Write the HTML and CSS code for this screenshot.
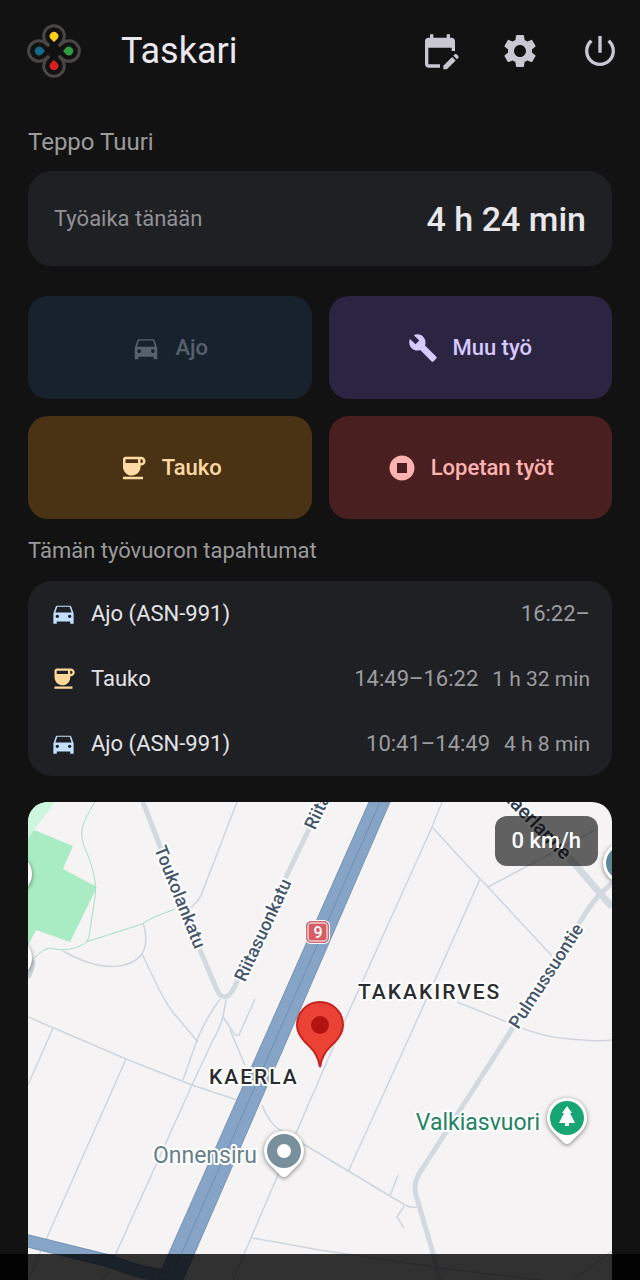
FILE: index.html
```html
<!DOCTYPE html>
<html lang="fi">
<head>
    <meta charset="UTF-8">
    <meta name="viewport" content="width=device-width, initial-scale=1.0">
    <title>Taskari</title>
    <link rel="stylesheet" href="styles.css">
</head>
<body>
    <svg class="sprite" aria-hidden="true">
        <symbol id="i-car" viewBox="0 0 24 24">
            <path d="M18.92 6.01C18.72 5.42 18.16 5 17.5 5h-11c-.66 0-1.21.42-1.42 1.01L3 12v9h3v-2h12v2h3v-9l-2.08-5.99zM6.5 16c-.83 0-1.5-.67-1.5-1.5S5.67 13 6.5 13s1.5.67 1.5 1.5S7.33 16 6.5 16zm11 0c-.83 0-1.5-.67-1.5-1.5s.67-1.5 1.5-1.5 1.5.67 1.5 1.5-.67 1.5-1.5 1.5zM4.8 11l1.7-5h11l1.7 5H4.8z"/>
        </symbol>
        <symbol id="i-coffee" viewBox="0 0 24 24">
            <path d="M18.5 3H6c-1.1 0-2 .9-2 2v5.71c0 3.83 2.95 7.18 6.78 7.29 3.96.12 7.22-3.06 7.22-7v-1h.5c1.93 0 3.5-1.57 3.5-3.5S20.43 3 18.5 3zM16 5v3H6V5h10zm2.5 3H18V5h.5c.83 0 1.5.67 1.5 1.5S19.33 8 18.5 8zM4 19h16v2H4v-2z"/>
        </symbol>
        <symbol id="i-wrench" viewBox="0 0 24 24">
            <path d="M22.7 19l-9.1-9.1c.9-2.3.4-5-1.5-6.9-2-2-5-2.4-7.4-1.3L9 6 6 9 1.6 4.7C.4 7.1.9 10.1 2.9 12.1c1.9 1.9 4.6 2.4 6.9 1.5l9.1 9.1c.4.4 1 .4 1.4 0l2.3-2.3c.5-.4.5-1.1.1-1.4z"/>
        </symbol>
        <symbol id="i-stop" viewBox="0 0 24 24">
            <path d="M12 2C6.48 2 2 6.48 2 12s4.48 10 10 10 10-4.48 10-10S17.52 2 12 2zm4 14H8V8h8v8z"/>
        </symbol>
        <symbol id="i-calendar" viewBox="0 0 24 24">
            <path d="M12 22H5c-1.11 0-2-.9-2-2L3.01 6c0-1.1.88-2 1.99-2h1V2h2v2h8V2h2v2h1c1.1 0 2 .9 2 2v6h-2v-2H5v10h7v2zm10.13-5.01l.71-.71c.39-.39.39-1.02 0-1.41l-.71-.71c-.39-.39-1.02-.39-1.41 0l-.71.71 2.12 2.12zm-.71.71l-5.3 5.3H14v-2.12l5.3-5.3 2.12 2.12z"/>
        </symbol>
        <symbol id="i-settings" viewBox="0 0 24 24">
            <path d="M19.14 12.94c.04-.3.06-.61.06-.94 0-.32-.02-.64-.07-.94l2.03-1.58c.18-.14.23-.41.12-.61l-1.92-3.32c-.12-.22-.37-.29-.59-.22l-2.39.96c-.5-.38-1.03-.7-1.62-.94l-.36-2.54c-.04-.24-.24-.41-.48-.41h-3.84c-.24 0-.43.17-.47.41l-.36 2.54c-.59.24-1.13.57-1.62.94l-2.39-.96c-.22-.08-.47 0-.59.22L2.74 8.87c-.12.21-.08.47.12.61l2.03 1.58c-.05.3-.09.63-.09.94s.02.64.07.94l-2.03 1.58c-.18.14-.23.41-.12.61l1.92 3.32c.12.22.37.29.59.22l2.39-.96c.5.38 1.03.7 1.62.94l.36 2.54c.05.24.24.41.48.41h3.84c.24 0 .44-.17.47-.41l.36-2.54c.59-.24 1.13-.56 1.62-.94l2.39.96c.22.08.47 0 .59-.22l1.92-3.32c.12-.22.07-.47-.12-.61l-2.01-1.58zM12 15.6c-1.98 0-3.6-1.62-3.6-3.6s1.62-3.6 3.6-3.6 3.6 1.62 3.6 3.6-1.62 3.6-3.6 3.6z"/>
        </symbol>
        <symbol id="i-power" viewBox="0 0 24 24">
            <path d="M13 3h-2v10h2V3zm4.83 2.17l-1.42 1.42C17.99 7.86 19 9.81 19 12c0 3.87-3.13 7-7 7s-7-3.13-7-7c0-2.19 1.01-4.14 2.58-5.42L6.17 5.17C4.23 6.82 3 9.26 3 12c0 4.97 4.03 9 9 9s9-4.03 9-9c0-2.74-1.23-5.18-3.17-6.83z"/>
        </symbol>
    </svg>

    <div class="app">
        <header class="topbar">
            <svg class="logo" viewBox="-27 -27 54 54" aria-hidden="true">
                <g class="logo-ring">
                    <path d="M-5 -5L-7 -7.5A10.3 10.3 0 1 1 7 -7.5L5 -5"/>
                    <path d="M-5 -5L-7 -7.5A10.3 10.3 0 1 1 7 -7.5L5 -5" transform="rotate(90)"/>
                    <path d="M-5 -5L-7 -7.5A10.3 10.3 0 1 1 7 -7.5L5 -5" transform="rotate(180)"/>
                    <path d="M-5 -5L-7 -7.5A10.3 10.3 0 1 1 7 -7.5L5 -5" transform="rotate(270)"/>
                </g>
                <path fill="#fdd017" d="M0 -9L-3.4 -12.2A4.3 4.3 0 1 1 3.4 -12.2Z"/>
                <path fill="#2f9e41" d="M0 -9L-3.4 -12.2A4.3 4.3 0 1 1 3.4 -12.2Z" transform="rotate(90)"/>
                <path fill="#d8201f" d="M0 -9L-3.4 -12.2A4.3 4.3 0 1 1 3.4 -12.2Z" transform="rotate(180)"/>
                <path fill="#136a8a" d="M0 -9L-3.4 -12.2A4.3 4.3 0 1 1 3.4 -12.2Z" transform="rotate(270)"/>
            </svg>
            <h1>Taskari</h1>
            <nav class="topbar-actions">
                <button class="icon-btn" type="button" aria-label="Muokkaa kalenteria"><svg><use href="#i-calendar"/></svg></button>
                <button class="icon-btn" type="button" aria-label="Asetukset"><svg><use href="#i-settings"/></svg></button>
                <button class="icon-btn" type="button" aria-label="Kirjaudu ulos"><svg><use href="#i-power"/></svg></button>
            </nav>
        </header>

        <main>
            <h2 class="label label-user">Teppo Tuuri</h2>
            <section class="card worktime">
                <span class="worktime-label">Työaika tänään</span>
                <strong class="worktime-value">4 h 24 min</strong>
            </section>

            <div class="actions">
                <button class="btn btn-drive" type="button" disabled><svg><use href="#i-car"/></svg>Ajo</button>
                <button class="btn btn-other" type="button"><svg><use href="#i-wrench"/></svg>Muu työ</button>
                <button class="btn btn-break" type="button"><svg><use href="#i-coffee"/></svg>Tauko</button>
                <button class="btn btn-end" type="button"><svg><use href="#i-stop"/></svg>Lopetan työt</button>
            </div>

            <h2 class="label">Tämän työvuoron tapahtumat</h2>
            <ul class="card events">
                <li>
                    <svg class="drive"><use href="#i-car"/></svg>
                    <span class="event-name">Ajo (ASN-991)</span>
                    <span class="event-time">16:22–</span>
                </li>
                <li>
                    <svg class="break"><use href="#i-coffee"/></svg>
                    <span class="event-name">Tauko</span>
                    <span class="event-time">14:49–16:22</span>
                    <span class="event-duration">1 h 32 min</span>
                </li>
                <li>
                    <svg class="drive"><use href="#i-car"/></svg>
                    <span class="event-name">Ajo (ASN-991)</span>
                    <span class="event-time">10:41–14:49</span>
                    <span class="event-duration">4 h 8 min</span>
                </li>
            </ul>

            <section class="map" aria-label="Kartta">
                <svg viewBox="28 802 584 478" preserveAspectRatio="xMidYMin slice">
                    <!-- parks -->
                    <path fill="#cdf7dd" d="M28 802H55L34 830L28 838Z"/>
                    <path fill="#a9ebc2" d="M34 830L73 846L63 869L97 887L70 942L36 930L28 946V838Z"/>
                    <g class="trail">
                        <path d="M95 802C82 824 79 830 84 846C94 868 97 885 95 897L90 930C89 941 87 943 80 946C70 950 62 951 50 948C42 949 38 956 30 961"/>
                        <path d="M86 942L142 924Q150 918 175 909"/>
                    </g>

                    <!-- paths and property lines -->
                    <g class="path">
                        <path d="M237 802L202 893Q198 903 190 908"/>
                        <path d="M143 923Q149 942 142 954C132 967 105 975 63 951"/>
                        <path d="M142 954C155 980 165 1005 177 1017L198 1042"/>
                        <path d="M28 1017L126 1059L192 1085L237 1100"/>
                        <path d="M53 1028L28 1085"/>
                        <path d="M126 1059L37 1260L28 1280"/>
                        <path d="M220 999Q205 1020 197 1040L183 1080"/>
                        <path d="M226 1000L223 1017Q220 1028 213 1040L192 1085L113 1260L103 1280"/>
                        <path d="M223 1017L235 1035H239L255 999"/>
                        <path d="M230 1030L245 1065"/>
                        <path d="M442 802L432 827L345 1020L277 1177L233 1280"/>
                        <path d="M432 827L480 879L488 887L552 956"/>
                        <path d="M488 887L595 830"/>
                        <path d="M480 879L435 980L408 1040L348 1172"/>
                        <path d="M457 1002L507 1022Q540 1037 570 1039Q600 1042 612 1040"/>
                        <path d="M262 1105C268 1120 274 1128 290 1136L405 1205Q410 1208 417 1207"/>
                        <path d="M398 1175L390 1196"/>
                        <path d="M404 1206L397 1217L404 1228"/>
                        <path d="M252 1238L320 1250L440 1268L540 1280"/>
                        <path d="M612 1251L573 1280"/>
                        <path d="M33 960Q33 970 28 978" stroke-width="4"/>
                    </g>

                    <!-- streets -->
                    <g class="street">
                        <path d="M143 802L200 950L217 990Q224 1004 233 990L287 875L322 802"/>
                        <path class="wide" d="M505 792L567 855L612 907"/>
                        <path d="M612 883L601 893Q590 905 580 922L505 1040L419 1174Q413 1184 416 1195L433 1253L439 1280"/>
                    </g>

                    <!-- highway 9 -->
                    <path fill="none" stroke="#7391b5" stroke-width="13" d="M24 1240L113 1262Q140 1274 180 1278"/>
                    <path fill="none" stroke="#86a4c6" stroke-width="11" d="M24 1240L113 1262Q140 1274 180 1278"/>
                    <path fill="#86a4c6" stroke="#7592b6" stroke-width="1" d="M369 802H390L183 1280H157Z"/>
                    <path fill="none" stroke="#6f8fb4" stroke-width="1" d="M380 802L170 1280"/>
                    <rect x="305" y="920" width="25" height="24" rx="6" fill="#fff"/>
                    <rect x="306" y="921" width="23" height="22" rx="5" fill="#d4676d"/>
                    <rect x="308" y="923" width="19" height="18" rx="3" fill="#d75d62" stroke="#fff" stroke-width="1"/>
                    <text class="shield" x="318" y="938">9</text>

                    <!-- street names -->
                    <g class="street-name">
                        <text transform="translate(180 897) rotate(68)" y="6">Toukolankatu</text>
                        <text transform="translate(263 930) rotate(-65)" y="6">Riitasuonkatu</text>
                        <text transform="translate(333 778) rotate(-65)" y="6">Riitasuonkatu</text>
                        <text transform="translate(546 976) rotate(-57)" y="6">Pulmussuontie</text>
                        <text class="dark" transform="translate(536 824) rotate(46)" y="6">Kaerlantie</text>
                    </g>

                    <!-- places -->
                    <text class="district" x="209" y="1084">KAERLA</text>
                    <text class="district" x="358" y="999">TAKAKIRVES</text>
                    <text class="place" x="257" y="1163">Onnensiru</text>
                    <text class="place nature" x="540" y="1130">Valkiasvuori</text>

                    <g class="marker" transform="translate(284 1151)">
                        <path d="M0 26Q-3 26 -6 22L-14 14A20 20 0 1 1 14 14L6 22Q3 26 0 26Z"/>
                        <circle r="17" fill="#78909c"/>
                        <circle r="7" fill="#fff"/>
                    </g>
                    <g class="marker" transform="translate(567 1118)">
                        <path d="M0 26Q-3 26 -6 22L-14 14A20 20 0 1 1 14 14L6 22Q3 26 0 26Z"/>
                        <circle r="17" fill="#17a673"/>
                        <path class="tree" d="M0 -12L5 -5H3L8 5H2V8H-2V5H-8L-3 -5H-5Z"/>
                    </g>
                    <g class="marker">
                        <circle cx="12" cy="874" r="20"/>
                        <circle cx="12" cy="958" r="20"/>
                        <circle cx="623" cy="863" r="20"/>
                        <circle cx="623" cy="863" r="17" fill="#5f8797"/>
                    </g>

                    <!-- own position -->
                    <path fill="#ea4335" stroke="#c5221f" stroke-width="2" d="M320 1067C318 1054 312 1049 306 1043C300 1037 297 1032 297 1025A23 23 0 0 1 343 1025C343 1032 340 1037 334 1043C328 1049 322 1054 320 1067Z"/>
                    <circle cx="320" cy="1025" r="9" fill="#b31412"/>
                </svg>
                <output class="speed">0 km/h</output>
            </section>
        </main>
    </div>

    <div class="system-nav"></div>
</body>
</html>
```

FILE: styles.css
```css
* {
    margin: 0;
    padding: 0;
    box-sizing: border-box;
}

body {
    font-family: Roboto, "Noto Sans", sans-serif;
    font-size: 22px;
    line-height: 30px;
    background: #121212;
    color: #e3e3e8;
}

button {
    border: none;
    font: inherit;
    cursor: pointer;
}

svg {
    display: block;
    fill: currentColor;
}

.sprite {
    position: absolute;
    width: 0;
    height: 0;
}

.app {
    min-height: 100vh;
    display: flex;
    flex-direction: column;
}

/* Top bar */
.topbar {
    display: flex;
    align-items: center;
    height: 102px;
    padding: 0 20px 0 27px;
}

.logo {
    width: 54px;
    height: 54px;
    margin-right: 40px;
}

.logo-ring {
    fill: none;
    stroke: #4a4646;
    stroke-width: 3;
}

.topbar h1 {
    flex: 1;
    font-size: 36px;
    line-height: 44px;
    font-weight: 400;
    color: #e8e8ee;
}

.topbar-actions {
    display: flex;
    gap: 40px;
}

.icon-btn {
    background: none;
    color: #c8c7d2;
}

.icon-btn svg {
    width: 40px;
    height: 40px;
}

/* Content */
main {
    flex: 1;
    display: flex;
    flex-direction: column;
    padding: 8px 28px 0;
}

.label {
    margin: 17px 0 15px;
    font-size: 22px;
    font-weight: 400;
    color: #9b9b9b;
}

.label-user {
    margin-bottom: 14px;
    font-size: 24px;
}

.card {
    background: #1f2023;
    border-radius: 24px;
}

.worktime {
    display: flex;
    justify-content: space-between;
    align-items: center;
    height: 95px;
    padding: 0 26px;
}

.worktime-label {
    color: #929296;
}

.worktime-value {
    font-size: 34px;
    font-weight: 500;
    color: #e8e8ec;
}

.actions {
    display: grid;
    grid-template-columns: 1fr 1fr;
    gap: 17px;
    margin-top: 30px;
}

.btn {
    display: flex;
    align-items: center;
    justify-content: center;
    gap: 14px;
    height: 103px;
    border-radius: 20px;
    font-weight: 500;
}

.btn svg {
    width: 30px;
    height: 30px;
}

.btn-drive {
    background: #18222c;
    color: #56616c;
}

.btn-other {
    background: #2b2542;
    color: #d6c9ff;
}

.btn-break {
    background: #4a3315;
    color: #ffdba3;
}

.btn-end {
    background: #491f20;
    color: #ffb3b0;
}

.btn:disabled {
    cursor: default;
}

/* Shift events */
.events {
    list-style: none;
}

.events li {
    display: flex;
    align-items: center;
    gap: 14px;
    height: 65px;
    padding: 0 22px;
}

.events svg {
    width: 27px;
    height: 27px;
}

.drive {
    color: #c2dfff;
}

.break {
    color: #ffd899;
}

.event-name {
    flex: 1;
}

.event-time,
.event-duration {
    color: #9c9da1;
}

.event-duration {
    font-size: 21px;
}

/* Map */
.map {
    position: relative;
    flex: 1;
    min-height: 478px;
    margin-top: 26px;
    border-radius: 20px 20px 0 0;
    overflow: hidden;
    background: #f5f3f4;
}

.map > svg {
    position: absolute;
    width: 100%;
    height: 100%;
}

.trail {
    fill: none;
    stroke: #a3dfc4;
    stroke-width: 1;
}

.path {
    fill: none;
    stroke: #cdd6df;
    stroke-width: 1.5;
}

.street {
    fill: none;
    stroke: #d2dae0;
    stroke-width: 5;
}

.street .wide {
    stroke-width: 7;
}

.map text {
    stroke: #fff;
    stroke-width: 4;
    stroke-linejoin: round;
    paint-order: stroke;
}

.street-name {
    fill: #45566c;
    font-size: 18px;
    font-weight: 500;
    text-anchor: middle;
}

.street-name .dark {
    fill: #2f3d4c;
    font-size: 20px;
}

.district {
    fill: #2b2c2f;
    font-size: 21px;
    font-weight: 500;
    letter-spacing: 2px;
}

.place {
    fill: #66808b;
    font-size: 23px;
    text-anchor: end;
}

.nature {
    fill: #23825f;
}

.map .shield {
    fill: #fff;
    stroke: none;
    font-size: 16px;
    font-weight: 500;
    text-anchor: middle;
}

.marker {
    fill: #fff;
    filter: drop-shadow(0 1px 2px rgba(0, 0, 0, 0.5));
}

.speed {
    position: absolute;
    top: 14px;
    right: 14px;
    padding: 10px 17px;
    border-radius: 12px;
    background: rgba(0, 0, 0, 0.6);
    color: #fff;
    font-weight: 500;
}

.system-nav {
    position: fixed;
    left: 0;
    right: 0;
    bottom: 0;
    height: 26px;
    background: rgba(0, 0, 0, 0.8);
}
```
